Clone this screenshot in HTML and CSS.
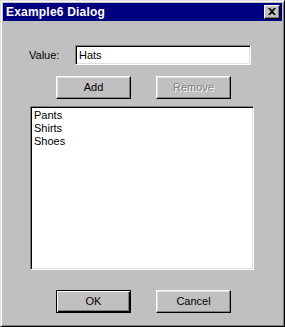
FILE: index.html
```html
<!DOCTYPE html>
<html>
<head>
<meta charset="utf-8">
<link rel="stylesheet" href="styles.css">
</head>
<body>
<div class="window">
  <div class="titlebar">
    <span class="title">Example6 Dialog</span>
    <span class="close"><svg width="8" height="7" viewBox="0 0 8 7"><path d="M0 0h2l2 2 2-2h2L5 3.5 8 7H6L4 5 2 7H0l3-3.5z" fill="#000"/></svg></span>
  </div>
  <div class="content">
    <div class="row-value">
      <span class="label">Value:</span>
      <div class="input">Hats</div>
    </div>
    <div class="buttons">
      <div class="btn">Add</div>
      <div class="btn disabled">Remove</div>
    </div>
    <div class="listbox">
      <div class="item">Pants</div>
      <div class="item">Shirts</div>
      <div class="item">Shoes</div>
    </div>
    <div class="buttons bottom">
      <div class="btn default">OK</div>
      <div class="btn">Cancel</div>
    </div>
  </div>
</div>
</body>
</html>
```
FILE: styles.css
```css
html, body {
  margin: 0;
  padding: 0;
  background: #c0c0c0;
}
body {
  font-family: "Liberation Sans", Arial, sans-serif;
  font-size: 11px;
  color: #000;
}
.window {
  box-sizing: border-box;
  width: 285px;
  height: 327px;
  background: #c0c0c0;
  border: 1px solid;
  border-color: #dfdfdf #000 #000 #dfdfdf;
  box-shadow: inset 1px 1px #fff, inset -1px -1px #808080;
  padding: 2px;
  display: flex;
  flex-direction: column;
}
.titlebar {
  height: 18px;
  background: #000080;
  color: #fff;
  display: flex;
  align-items: center;
  justify-content: space-between;
  padding: 0 2px 0 3px;
}
.title {
  font-weight: bold;
  font-size: 12px;
  letter-spacing: 0.2px;
}
.close {
  box-sizing: border-box;
  width: 16px;
  height: 14px;
  background: #c0c0c0;
  border: 1px solid;
  border-color: #fff #000 #000 #fff;
  box-shadow: inset -1px -1px #808080;
  display: flex;
  align-items: center;
  justify-content: center;
  padding: 0 1px 1px 0;
}
.close svg { display: block; }
.content {
  display: flex;
  flex-direction: column;
  padding-top: 24px;
}
.row-value {
  display: flex;
  align-items: center;
  height: 20px;
  padding-left: 26px;
}
.label {
  width: 46px;
}
.input {
  box-sizing: border-box;
  width: 176px;
  height: 20px;
  background: #fff;
  border: 1px solid;
  border-color: #808080 #fff #fff #808080;
  box-shadow: inset 1px 1px #000, inset -1px -1px #dfdfdf;
  padding: 3px 3px;
  line-height: 13px;
}
.buttons {
  display: flex;
  gap: 25px;
  padding-left: 53px;
  margin-top: 11px;
}
.buttons.bottom {
  margin-top: 20px;
}
.btn {
  box-sizing: border-box;
  width: 75px;
  height: 23px;
  background: #c0c0c0;
  border: 1px solid;
  border-color: #fff #000 #000 #fff;
  box-shadow: inset -1px -1px #808080, inset 1px 1px #dfdfdf;
  display: flex;
  align-items: center;
  justify-content: center;
  padding-bottom: 1px;
}
.btn.disabled {
  color: #808080;
  text-shadow: 1px 1px #fff;
}
.btn.default {
  border: 1px solid #000;
  box-shadow: inset 1px 1px #fff, inset -1px -1px #000, inset -2px -2px #808080;
}
.listbox {
  box-sizing: border-box;
  width: 224px;
  height: 164px;
  margin-left: 27px;
  margin-top: 7px;
  background: #fff;
  border: 1px solid;
  border-color: #808080 #fff #fff #808080;
  box-shadow: inset 1px 1px #000, inset -1px -1px #dfdfdf;
  padding: 2px 3px;
}
.item {
  line-height: 13px;
}
```
